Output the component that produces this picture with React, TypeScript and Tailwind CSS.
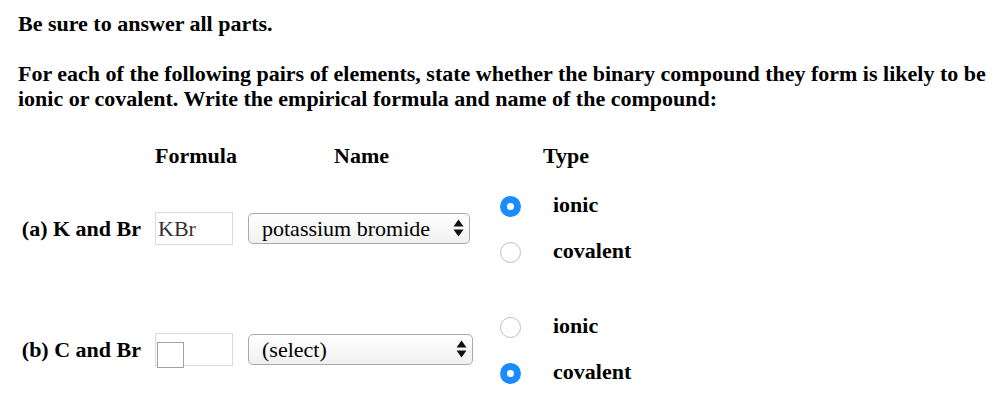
import React from "react";

const serif = { fontFamily: '"Liberation Serif", "Times New Roman", serif' };

function Radio({ checked }: { checked: boolean }) {
  return checked ? (
    <div className="w-[21px] h-[21px] shrink-0 rounded-full bg-[#1a8cff] flex items-center justify-center">
      <div className="w-[7px] h-[7px] rounded-full bg-white" />
    </div>
  ) : (
    <div className="w-[21px] h-[21px] shrink-0 rounded-full border border-[#bdbdbd] bg-white" />
  );
}

function Arrows() {
  return (
    <svg width="11" height="18" viewBox="0 0 11 18">
      <polygon points="5.5,0.5 10.5,7.5 0.5,7.5" fill="#111" />
      <polygon points="5.5,17.5 10.5,10.5 0.5,10.5" fill="#111" />
    </svg>
  );
}

function Select({ text, width }: { text: string; width: string }) {
  return (
    <div
      className={`${width} h-[31px] rounded-[5px] border border-[#a9a9a9] bg-gradient-to-b from-white to-[#f0f0f0] flex items-center justify-between pl-[13px] pr-[5px] text-[22px] leading-[25px] text-black`}
    >
      <span>{text}</span>
      <Arrows />
    </div>
  );
}

function Row({
  label,
  formula,
  name,
  selWidth,
  ionic,
  rowTop,
}: {
  label: string;
  formula: string;
  name: string;
  selWidth: string;
  ionic: boolean;
  rowTop: string;
}) {
  return (
    <div className={`flex items-center ${rowTop}`}>
      <div className="flex items-center mb-[3px]">
        <div className="w-[141px] font-bold text-[22px] leading-[25px] text-right">{label}</div>
        <div className="relative ml-[14px] w-[78px] h-[33px] border border-[#dadada] bg-white flex items-center pl-[2px] text-[22px] leading-[25px] text-[#333]">
          {formula}
          {formula === "" && (
            <div className="absolute left-[1px] top-[8px] w-[27px] h-[26px] border border-[#a0a0a0] bg-white" />
          )}
        </div>
        <div className="ml-[15px] w-[225px]">
          <Select text={name} width={selWidth} />
        </div>
      </div>
      <div className="ml-[27px] flex flex-col gap-[25px]">
        <div className="flex items-start">
          <Radio checked={ionic} />
          <span className="ml-[32px] -mt-[4px] font-bold text-[22px] leading-[25px]">ionic</span>
        </div>
        <div className="flex items-start">
          <Radio checked={!ionic} />
          <span className="ml-[32px] -mt-[4px] font-bold text-[22px] leading-[25px]">covalent</span>
        </div>
      </div>
    </div>
  );
}

export default function App() {
  return (
    <div className="w-[1001px] h-[418px] bg-white text-black overflow-hidden" style={serif}>
      <div className="pl-[18px] pt-[11px]">
        <div className="font-bold text-[22px] leading-[25px]">Be sure to answer all parts.</div>
        <div className="mt-[25px] font-bold text-[22px] leading-[25px] w-[976px]">
          For each of the following pairs of elements, state whether the binary compound they form is likely to be
          ionic or covalent. Write the empirical formula and name of the compound:
        </div>
      </div>
      <div className="flex mt-[32px] font-bold text-[22px] leading-[25px]">
        <div className="ml-[155px] w-[179px]">Formula</div>
        <div className="w-[209px]">Name</div>
        <div>Type</div>
      </div>
      <div>
        <Row label="(a) K and Br" formula="KBr" name="potassium bromide" selWidth="w-[222px]" ionic rowTop="mt-[28px]" />
        <Row label="(b) C and Br" formula="" name="(select)" selWidth="w-[225px]" ionic={false} rowTop="mt-[54px]" />
      </div>
    </div>
  );
}
